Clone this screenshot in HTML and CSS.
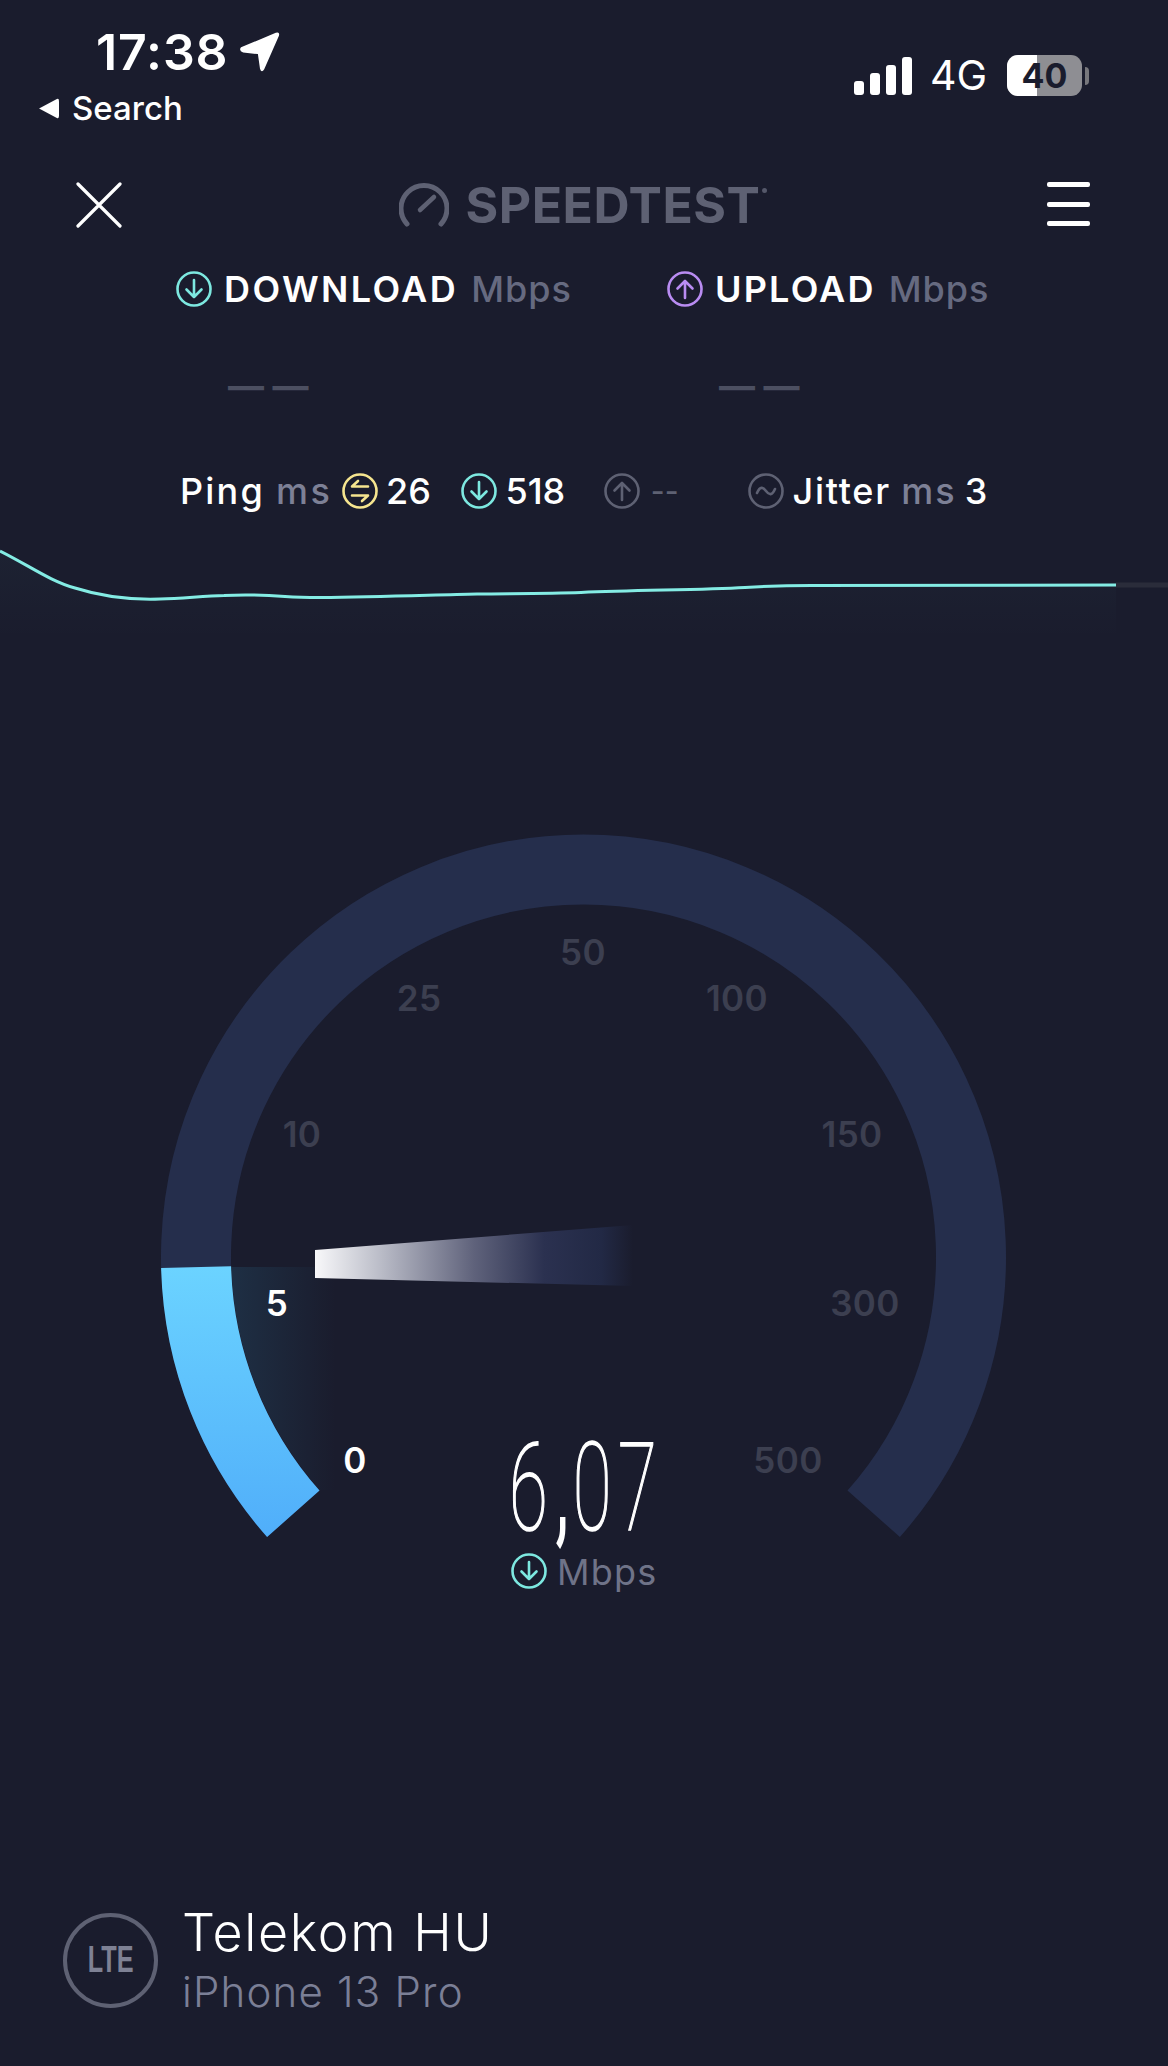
FILE: index.html
```html
<!DOCTYPE html>
<html lang="en">
<head>
<meta charset="utf-8">
<title>Speedtest</title>
<link rel="stylesheet" href="styles.css">
</head>
<body>
<main class="page">
  <header class="status">
    <div class="status-left">
      <div class="clock"><span class="time">17:38</span>
        <svg class="loc" viewBox="0 0 38 38"><path d="M1 14.5 L34 0.8 Q38 -0.5 37 3.5 L23 35.5 Q20.5 39.5 19 35 L17 21 L3 19.5 Q-1.5 17.5 1 14.5 Z"/></svg>
      </div>
      <div class="back"><svg class="back-tri" viewBox="0 0 20 20"><path d="M1 10 L18 1 Q20 0 20 3 V17 Q20 20 18 19 Z"/></svg><span>Search</span></div>
    </div>
    <div class="status-right">
      <div class="signal"><i class="b1"></i><i class="b2"></i><i class="b3"></i><i class="b4"></i></div>
      <span class="net">4G</span>
      <div class="battery"><div class="cell"><span class="level"></span><span class="pct">40</span></div><i class="nub"></i></div>
    </div>
  </header>

  <nav class="nav">
    <svg class="close" viewBox="0 0 46 46"><path d="M2 2 L44 44 M44 2 L2 44"/></svg>
    <div class="logo">
      <svg class="logo-icon" viewBox="0 0 50 44"><path class="dial" d="M8 41 A23 23 0 1 1 42 41"/><path class="hand" d="M21 27 L35 14"/></svg>
      <span class="logo-text">SPEEDTEST</span><i class="reg"></i>
    </div>
    <div class="burger"><i></i><i></i><i></i></div>
  </nav>

  <section class="results">
    <div class="result r-down">
      <div class="result-head">
        <svg class="ci cyan" viewBox="0 0 36 36"><circle cx="18" cy="18" r="16.5"/><path d="M18 9 V26 M10.5 18.5 L18 26 L25.5 18.5"/></svg>
        <strong class="h-down">DOWNLOAD</strong><span class="unit">Mbps</span>
      </div>
      <div class="dash">— —</div>
    </div>
    <div class="result r-up">
      <div class="result-head">
        <svg class="ci violet" viewBox="0 0 36 36"><circle cx="18" cy="18" r="16.5"/><path d="M18 27 V10 M10.5 17.5 L18 10 L25.5 17.5"/></svg>
        <strong class="h-up">UPLOAD</strong><span class="unit">Mbps</span>
      </div>
      <div class="dash">— —</div>
    </div>
  </section>

  <section class="stats">
    <span class="s-ping">Ping</span><span class="s-ms">ms</span>
    <svg class="ci yellow" viewBox="0 0 36 36"><circle cx="18" cy="18" r="16.5"/><path d="M26 13.5 H10 L16 8 M10 22.5 H26 L20 28"/></svg>
    <span class="s-26">26</span>
    <svg class="ci cyan s-gap1" viewBox="0 0 36 36"><circle cx="18" cy="18" r="16.5"/><path d="M18 9 V26 M10.5 18.5 L18 26 L25.5 18.5"/></svg>
    <span class="s-518">518</span>
    <svg class="ci grey s-gap2" viewBox="0 0 36 36"><circle cx="18" cy="18" r="16.5"/><path d="M18 27 V10 M10.5 17.5 L18 10 L25.5 17.5"/></svg>
    <span class="s-none">--</span>
    <svg class="ci grey s-gap3" viewBox="0 0 36 36"><circle cx="18" cy="18" r="16.5"/><path d="M9 20 C12 13 15 14 18 18 C21 22 24 23 27 16"/></svg>
    <span class="s-jit">Jitter</span><span class="s-ms2">ms</span><span class="s-3">3</span>
  </section>

  <svg class="trend" viewBox="0 540 1168 100">
    <defs>
      <linearGradient id="trendGlow" x1="0" y1="0" x2="0" y2="1">
        <stop offset="0" stop-color="#7de8e0" stop-opacity=".03"/>
        <stop offset="1" stop-color="#7de8e0" stop-opacity="0"/>
      </linearGradient>
    </defs>
    <path class="trend-fill" d="M0 551 C30 566 50 581 75 588 C100 596 130 600 160 599 C185 598 205 596 224 595.5 C240 594.5 265 595 285 596.5 C300 597.5 310 597.5 320 597.5 C380 597 430 595 477 594 C520 593.5 550 593.5 581 592.5 C640 590 700 590 745 587.5 C770 586 790 585.5 812 585.5 L1116 585 V640 H0 Z"/>
    <path class="trend-line" d="M0 551 C30 566 50 581 75 588 C100 596 130 600 160 599 C185 598 205 596 224 595.5 C240 594.5 265 595 285 596.5 C300 597.5 310 597.5 320 597.5 C380 597 430 595 477 594 C520 593.5 550 593.5 581 592.5 C640 590 700 590 745 587.5 C770 586 790 585.5 812 585.5 L1116 585"/>
    <path class="trend-rest" d="M1116 585 H1168"/>
  </svg>

  <svg class="gauge" viewBox="0 800 1168 820">
    <defs>
      <linearGradient id="blue" gradientUnits="userSpaceOnUse" x1="0" y1="1268" x2="0" y2="1537">
        <stop offset="0" stop-color="#6bd3ff"/>
        <stop offset="1" stop-color="#50aefa"/>
      </linearGradient>
      <linearGradient id="glow" gradientUnits="userSpaceOnUse" x1="232" y1="0" x2="335" y2="0">
        <stop offset="0" stop-color="#1e2f44"/>
        <stop offset="1" stop-color="#1e2f44" stop-opacity="0"/>
      </linearGradient>
      <linearGradient id="needle" gradientUnits="userSpaceOnUse" x1="315" y1="0" x2="633" y2="0">
        <stop offset="0" stop-color="#f8f8fa"/>
        <stop offset=".2" stop-color="#bcbec9"/>
        <stop offset=".5" stop-color="#5f627b"/>
        <stop offset=".72" stop-color="#2b3150"/>
        <stop offset=".9" stop-color="#222945"/>
        <stop offset="1" stop-color="#222945" stop-opacity="0"/>
      </linearGradient>
    </defs>
    <path class="track" d="M293.3 1513.8 A387.5 387.5 0 1 1 873.7 1513.8"/>
    <path class="glow" d="M335 1267 L231.4 1267 A352 352 0 0 0 320 1490 L335 1490 Z"/>
    <path class="fill" d="M293.3 1513.8 A387.5 387.5 0 0 1 196.1 1267.1"/>
    <path class="needle" d="M315 1250 L633 1225 V1286 L315 1278 Z"/>
    <g class="ticks">
      <text x="583" y="965">50</text>
      <text x="419" y="1011">25</text>
      <text x="737" y="1011">100</text>
      <text x="302" y="1147">10</text>
      <text x="852" y="1147">150</text>
      <text class="on" x="277" y="1316">5</text>
      <text x="865" y="1316">300</text>
      <text class="on" x="355" y="1473">0</text>
      <text x="788" y="1473">500</text>
    </g>
    <text class="speed" transform="translate(509 1530) scale(.58 1)"><tspan x="0">6</tspan><tspan class="comma" x="80">,</tspan><tspan x="110">0</tspan><tspan x="188">7</tspan></text>
    <g transform="translate(511 1553)">
      <circle class="mini" cx="18" cy="18" r="16.5"/>
      <path class="mini" d="M18 9 V26 M10.5 18.5 L18 26 L25.5 18.5"/>
    </g>
    <text class="speed-unit" x="557" y="1585">Mbps</text>
  </svg>

  <footer class="carrier">
    <div class="lte"><span>LTE</span></div>
    <div class="carrier-text">
      <div class="carrier-name">Telekom HU</div>
      <div class="carrier-device">iPhone 13 Pro</div>
    </div>
  </footer>
</main>
</body>
</html>
```
FILE: styles.css
```css
* { box-sizing: border-box; }
html, body { margin: 0; padding: 0; background: #1a1c2d; }
body { font-family: Inter, "Liberation Sans", sans-serif; color: #fff; }
.page { position: relative; width: 1168px; height: 2066px; overflow: hidden; display: flex; flex-direction: column; background: #1a1c2d; }

/* status bar */
.status { height: 170px; padding: 24px 79px 0 38px; display: flex; justify-content: space-between; flex: none; }
.clock { display: flex; align-items: center; padding-left: 58px; height: 56px; }
.time { font-size: 50px; font-weight: 600; letter-spacing: 0.9px; line-height: 56px; }
.loc { width: 40px; height: 40px; margin-left: 11px; fill: #fff; }
.back { display: flex; align-items: center; margin-top: 10px; height: 36px; font-size: 33px; font-weight: 500; }
.back-tri { width: 21px; height: 21px; fill: #fff; margin-right: 13px; }
.status-right { display: flex; align-items: flex-start; padding-top: 31px; }
.signal { display: flex; align-items: flex-end; gap: 6px; height: 38px; margin-top: 2px; }
.signal i { display: block; width: 10px; background: #fff; border-radius: 3px; }
.b1 { height: 14px; } .b2 { height: 22px; } .b3 { height: 30px; } .b4 { height: 38px; }
.net { font-size: 41px; line-height: 44px; margin-left: 18px; margin-top: -2px; }
.battery { display: flex; align-items: center; margin-left: 20px; height: 41px; }
.cell { position: relative; width: 75px; height: 41px; border-radius: 11px; background: #8e8e93; overflow: hidden; display: flex; align-items: center; justify-content: center; }
.level { position: absolute; left: 0; top: 0; width: 30px; height: 100%; background: #fff; }
.pct { position: relative; color: #1a1c2d; font-size: 34px; font-weight: 700; line-height: 41px; }
.nub { display: block; width: 4px; height: 18px; margin-left: 3px; background: #77777c; border-radius: 0 4px 4px 0; }

/* nav */
.nav { height: 76px; flex: none; padding: 12px 78px 0 76px; display: flex; justify-content: space-between; align-items: flex-start; position: relative; }
.close { width: 46px; height: 46px; fill: none; stroke: #fff; stroke-width: 3.2; stroke-linecap: round; }
.logo { display: flex; align-items: center; height: 44px; color: #5e6173; margin-top: 1px; margin-right: 3px; }
.logo-icon { width: 50px; height: 44px; fill: none; stroke: #5e6173; stroke-linecap: round; }
.dial { stroke-width: 5; }
.hand { stroke-width: 4.5; }
.logo-text { margin-left: 17px; font-size: 50px; font-weight: 700; letter-spacing: 0.5px; line-height: 44px; }
.reg { display: block; width: 5px; height: 5px; margin: -30px 0 0 2px; border-radius: 50%; background: #55586a; }
.burger { width: 43px; height: 44px; display: flex; flex-direction: column; justify-content: space-between; }
.burger i { display: block; height: 5px; background: #fff; border-radius: 2px; }

/* results */
.ci { width: 36px; height: 36px; flex: none; fill: none; stroke-width: 2.6; stroke-linecap: round; stroke-linejoin: round; }
.cyan { stroke: #7de8e0; }
.violet { stroke: #b98cf2; }
.yellow { stroke: #f6e58f; }
.grey { stroke: #5e6173; }
.results { flex: none; height: 190px; margin-top: 25px; padding-left: 176px; display: flex; }
.result { width: 491px; }
.result-head { display: flex; align-items: center; height: 36px; font-size: 36px; }
.result-head strong { font-weight: 600; margin-left: 12px; }
.h-down { letter-spacing: 2.4px; }
.h-up { letter-spacing: 2.2px; }
.unit { color: #666a80; font-weight: 500; letter-spacing: 1px; margin-left: 13px; }
.dash { margin: 65px 0 0 52px; color: #4c4f61; font-size: 36px; line-height: 28px; font-weight: 700; }

.stats { flex: none; height: 36px; margin-top: 12px; padding-left: 180px; display: flex; align-items: center; font-size: 36px; font-weight: 500; }
.s-ping { letter-spacing: 2.2px; }
.s-ms { color: #7d8096; margin-left: 11px; letter-spacing: 2.6px; }
.s-ms2 { color: #7d8096; margin-left: 10.5px; letter-spacing: 2px; }
.stats .yellow { margin-left: 9.5px; }
.s-26 { margin-left: 8px; }
.s-gap1 { margin-left: 30px; }
.s-518 { margin-left: 8.5px; }
.s-gap2 { margin-left: 38.6px; }
.s-none { margin-left: 11px; color: #5e6173; font-size: 30px; }
.s-gap3 { margin-left: 69.4px; }
.s-jit { margin-left: 8.6px; letter-spacing: 1.7px; }
.s-3 { margin-left: 8px; }

/* trend */
.trend { display: block; flex: none; width: 1168px; height: 100px; margin-top: 31px; fill: none; }
.trend-fill { fill: url(#trendGlow); stroke: none; }
.trend-line { stroke: #84ece4; stroke-width: 3; }
.trend-rest { stroke: #2a2c3a; stroke-width: 5; }

/* gauge */
.gauge { display: block; flex: none; width: 1168px; height: 820px; margin-top: 160px; fill: none; }
.track { stroke: #252e4c; stroke-width: 70; }
.fill { stroke: url(#blue); stroke-width: 70; }
.glow { fill: url(#glow); }
.needle { fill: url(#needle); }
.ticks text { fill: #3c3f50; font-size: 35px; font-weight: 600; text-anchor: middle; letter-spacing: .4px; }
.ticks .on { fill: #fff; }
.speed { fill: #fff; stroke: #fff; stroke-width: 1.6; font-family: Roboto, sans-serif; font-weight: 100; font-size: 122px; }
.comma { stroke-width: 6; }
.mini { fill: none; stroke: #7de8e0; stroke-width: 2.6; stroke-linecap: round; stroke-linejoin: round; }
.speed-unit { fill: #6f7388; font-size: 36px; font-weight: 400; letter-spacing: 1.2px; }

/* carrier */
.carrier { flex: none; margin-top: 285px; padding-left: 63px; display: flex; align-items: center; }
.lte { width: 95px; height: 95px; border: 4px solid #5e6173; border-radius: 50%; display: flex; align-items: center; justify-content: center; }
.lte span { color: #7e8194; font-family: "Liberation Sans", sans-serif; font-weight: 700; font-size: 36px; display: inline-block; transform: scaleX(.7); }
.carrier-text { margin-left: 24px; }
.carrier-name { font-size: 52px; font-weight: 300; letter-spacing: 1.6px; line-height: 56px; }
.carrier-device { font-size: 42px; font-weight: 300; letter-spacing: 1.2px; color: #7b7f96; line-height: 46px; margin-top: 8px; }
```
